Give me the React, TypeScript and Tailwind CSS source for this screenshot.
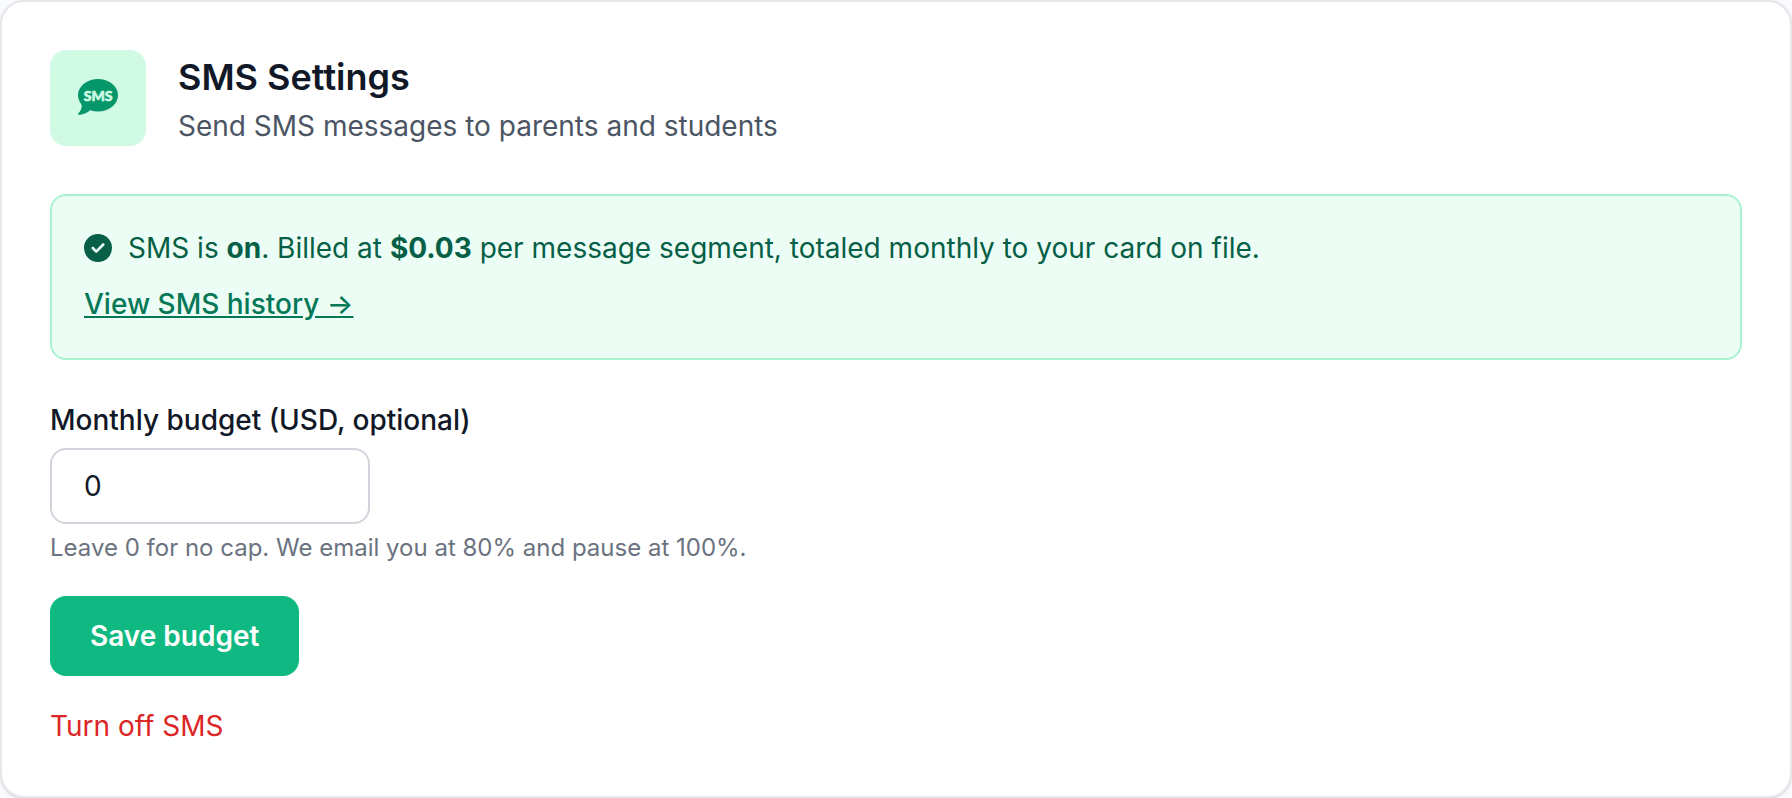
import { useState } from "react";
import { FaCircleCheck } from "react-icons/fa6";

function SmsBubbleIcon() {
  return (
    <svg viewBox="0 0 40 38" className="h-[38px] w-10" aria-hidden="true">
      <g fill="#059669">
        <ellipse cx="20" cy="16.3" rx="20" ry="16.3" />
        <path d="M3.2 24C4.6 28 3 31.6.3 34.4-.2 35 .1 35.7.8 35.7 6 35.7 9.8 33.2 12.2 31.2L9 24Z" />
      </g>
      <text
        x="20.2"
        y="21.8"
        textAnchor="middle"
        fontFamily="Lato, sans-serif"
        fontSize="14"
        fontWeight="900"
        fill="#d1fae5"
        stroke="#d1fae5"
        strokeWidth="0.6"
        strokeLinejoin="round"
      >
        SMS
      </text>
    </svg>
  );
}

export default function App() {
  const [budget, setBudget] = useState("0");

  return (
    <main className="bg-[#f9fafb] font-['Inter',sans-serif] text-[28px] leading-10 text-[#111827] antialiased">
      <section className="rounded-3xl border-2 border-[#e5e7eb] bg-white px-12 pt-12 pb-[50px] shadow-sm">
        <header className="mb-12 flex items-center gap-8">
          <div className="flex size-24 shrink-0 items-center justify-center rounded-2xl bg-[#d1fae5]">
            <SmsBubbleIcon />
          </div>
          <div>
            <h1 className="mb-0.5 text-4xl leading-[54px] font-semibold">SMS Settings</h1>
            <p className="text-[#4b5563]">Send SMS messages to parents and students</p>
          </div>
        </header>

        <div className="mb-10 rounded-2xl border-2 border-[#a7f3d0] bg-[#ecfdf5] px-8 pt-8 pb-[34px] text-[#065f46]">
          <div className="flex items-center gap-4">
            <FaCircleCheck className="size-7 shrink-0" aria-hidden="true" />
            <p>
              SMS is <strong className="font-bold">on</strong>. Billed at{" "}
              <strong className="font-bold">$0.03</strong> per message segment, totaled monthly to
              your card on file.
            </p>
          </div>
          <a
            href="#history"
            className="mt-4 block w-fit font-medium text-[#047857] underline"
          >
            View SMS history →
          </a>
        </div>

        <form onSubmit={(event) => event.preventDefault()}>
          <label htmlFor="budget" className="mb-2 block font-medium">
            Monthly budget (USD, optional)
          </label>
          <input
            id="budget"
            type="text"
            inputMode="decimal"
            value={budget}
            onChange={(event) => setBudget(event.target.value)}
            aria-describedby="budget-help"
            className="block w-80 rounded-2xl border-2 border-[#d1d5db] bg-white px-8 py-4"
          />
          <p id="budget-help" className="mt-2 text-2xl leading-8 text-[#6b7280]">
            Leave 0 for no cap. We email you at 80% and pause at 100%.
          </p>
          <button
            type="submit"
            className="mt-8 block rounded-2xl bg-[#10b981] px-10 py-5 font-semibold text-white"
          >
            Save budget
          </button>
        </form>

        <button type="button" className="mt-[30px] block text-[#dc2626]">
          Turn off SMS
        </button>
      </section>
    </main>
  );
}
